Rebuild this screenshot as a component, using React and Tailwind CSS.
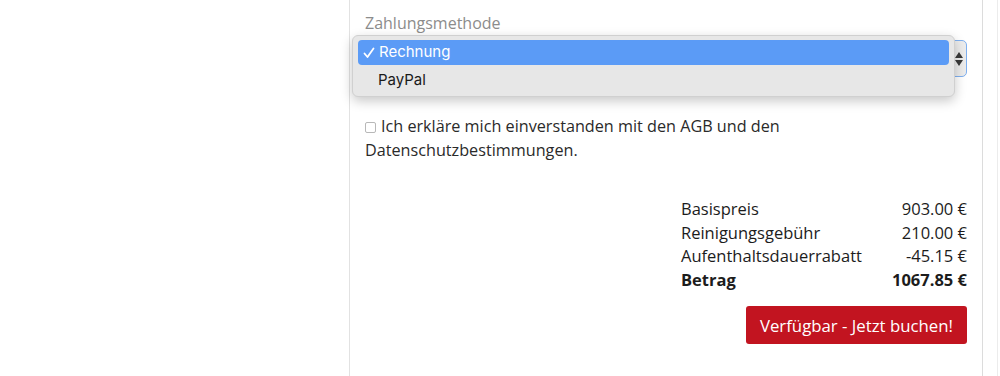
const rows = [
  { label: 'Basispreis', value: '903.00 €' },
  { label: 'Reinigungsgebühr', value: '210.00 €' },
  { label: 'Aufenthaltsdauerrabatt', value: '-45.15 €' },
];

export default function App() {
  return (
    <div className="w-[1000px] h-[376px] overflow-hidden bg-white flex text-[#1c1c1c]" style={{ fontFamily: '"Open Sans", sans-serif' }}>
      {/* left column */}
      <div className="w-[350px] shrink-0 border-r border-[#e2e2e2]"></div>

      {/* booking card */}
      <div className="w-[633px] h-[376px] shrink-0 border-r border-[#dcdcdc] px-[15px] relative">
        <p className="mt-[13px] text-[16px] leading-[20px] text-[#8c8c8c]">Zahlungsmethode</p>

        {/* select */}
        <div className="mt-[7px] h-[37px] w-[602px] rounded-[5px] border border-[#7fb0f0] bg-[#ececec] flex items-center justify-end pr-[3px]">
          <div className="flex flex-col items-center gap-[2px]">
            <svg width="8" height="6" viewBox="0 0 8 6"><path d="M4 0 L8 6 L0 6 Z" fill="#3a3a3a" /></svg>
            <svg width="8" height="6" viewBox="0 0 8 6"><path d="M0 0 L8 0 L4 6 Z" fill="#3a3a3a" /></svg>
          </div>
        </div>

        {/* open dropdown menu */}
        <div className="absolute left-[2px] top-[35px] w-[603px] h-[62px] rounded-[6px] bg-[#e7e7e7] border border-[#d0d0d0] shadow-[0_4px_12px_rgba(0,0,0,0.22)] px-[5px] pt-[4px]" style={{ fontFamily: 'Inter, sans-serif' }}>
          <div className="h-[25px] rounded-[4px] bg-[#5b9bf6] text-white text-[15px] flex items-center pl-[5px]">
            <svg width="12" height="12" viewBox="0 0 12 12" className="mr-[4px]">
              <path d="M1.5 6.5 L4.5 10 L10.5 1.5" fill="none" stroke="white" strokeWidth="1.8" strokeLinecap="round" strokeLinejoin="round" />
            </svg>
            Rechnung
          </div>
          <div className="mt-[2px] h-[26px] text-[15px] text-[#1a1a1a] flex items-center pl-[20px]">PayPal</div>
        </div>

        {/* terms */}
        <div className="mt-[37px] w-[440px] text-[16.2px] leading-[24px] text-[#2a2a2a]">
          <span className="inline-block w-[11px] h-[11px] border border-[#b8b8b8] rounded-[2px] mr-[5px] align-[-1px] bg-white"></span>
          Ich erkläre mich einverstanden mit den AGB und den Datenschutzbestimmungen.
        </div>

        {/* price summary */}
        <div className="mt-[35px] flex justify-end">
          <div className="w-[286px] text-[16.5px] leading-[23.6px]">
            {rows.map((r) => (
              <div key={r.label} className="flex justify-between">
                <span>{r.label}</span>
                <span>{r.value}</span>
              </div>
            ))}
            <div className="flex justify-between font-bold">
              <span>Betrag</span>
              <span>1067.85 €</span>
            </div>
          </div>
        </div>

        <div className="mt-[15px] flex justify-end">
          <button className="h-[38px] px-[14px] rounded-[3px] bg-[#c21420] text-white text-[16.8px]">
            Verfügbar - Jetzt buchen!
          </button>
        </div>
      </div>
      <div className="w-[15px] shrink-0 border-r border-[#ececec]"></div>
    </div>
  );
}
